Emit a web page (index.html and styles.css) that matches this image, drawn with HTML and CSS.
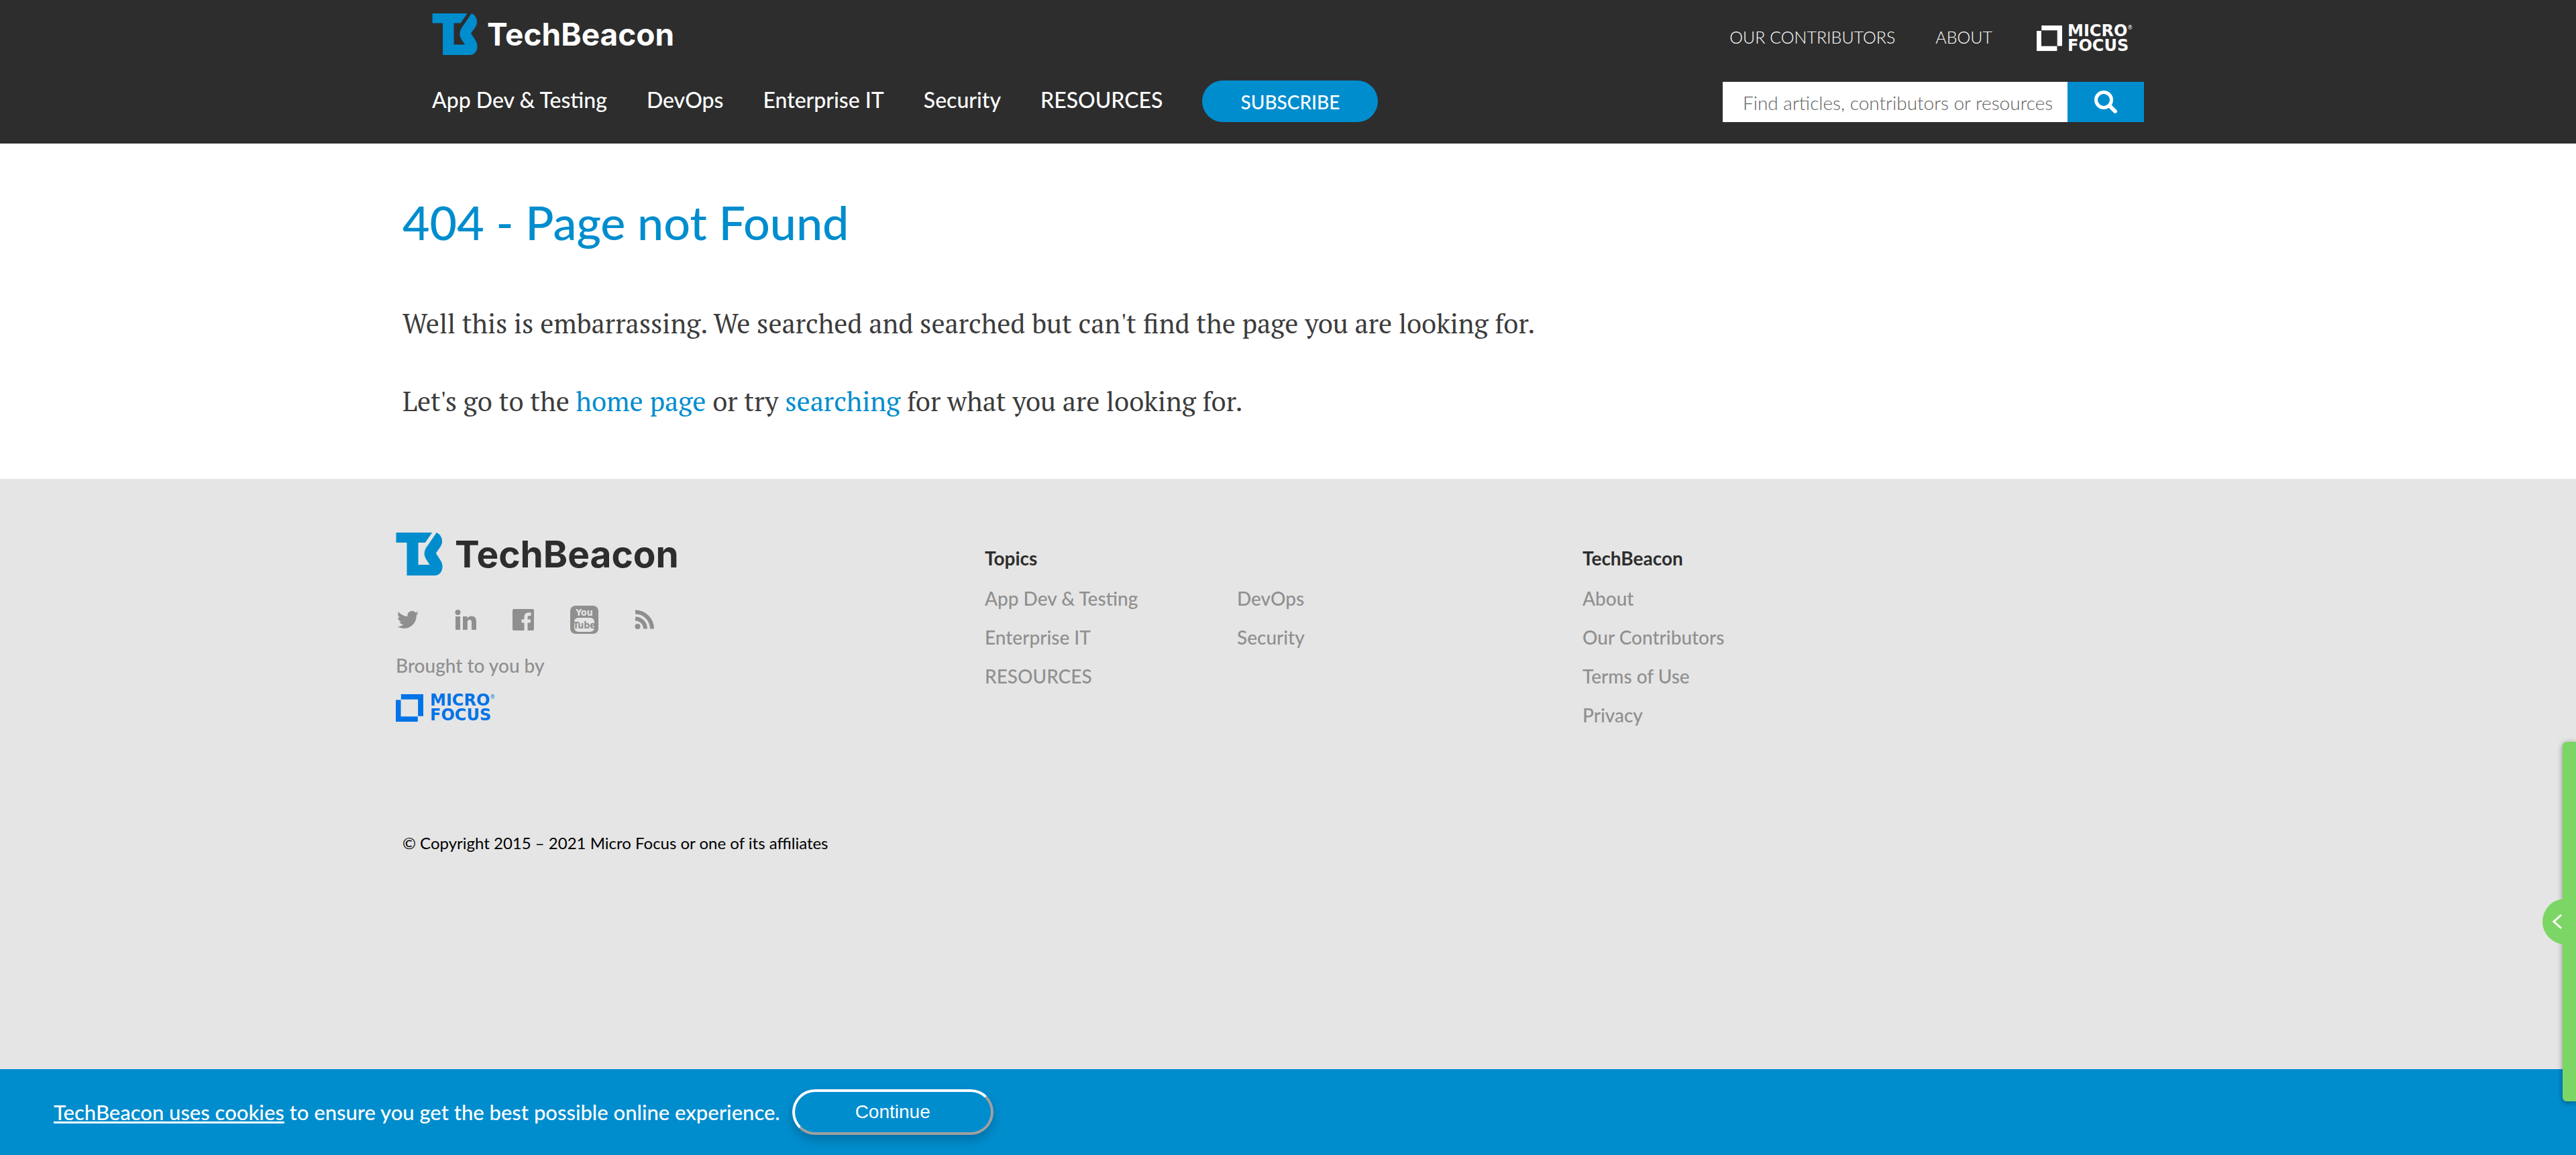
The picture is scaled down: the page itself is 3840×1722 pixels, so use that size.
FILE: index.html
```html
<!DOCTYPE html>
<html lang="en">
<head>
<meta charset="utf-8">
<title>404 - Page not Found | TechBeacon</title>
<meta name="viewport" content="width=device-width, initial-scale=1">
<link rel="stylesheet" href="styles.css">
</head>
<body>
<svg class="defs" aria-hidden="true">
  <symbol id="tb-mark" viewBox="0 0 207 192"><path d="M0 0H161L130 45H99V144H150L133 118Q119 94 133 70L181 0C204 10 213 40 199 62L178 92L201 128C216 155 203 192 173 192H48V45H0Z"/></symbol>
  <symbol id="mf-mark" viewBox="0 0 120 120"><path d="M23 0H120V96H97V23H23ZM0 25H22V97H96V120H0Z"/></symbol>
</svg>

<header class="site-header">
  <div class="header-inner">
    <div class="header-row">
      <a class="brand" href="#"><svg class="brand-mark"><use href="#tb-mark"/></svg><span>TechBeacon</span></a>
      <nav class="utility" aria-label="Utility">
        <a href="#">OUR CONTRIBUTORS</a>
        <a href="#">ABOUT</a>
        <a class="mf" href="#"><svg class="mf-mark"><use href="#mf-mark"/></svg><span class="mf-name">MICRO<sup>®</sup><br>FOCUS</span></a>
      </nav>
    </div>
    <div class="header-row header-row-main">
      <nav class="main-nav" aria-label="Main">
        <a href="#">App Dev &amp; Testing</a>
        <a href="#">DevOps</a>
        <a href="#">Enterprise IT</a>
        <a href="#">Security</a>
        <a href="#">RESOURCES</a>
        <a class="subscribe" href="#">SUBSCRIBE</a>
      </nav>
      <form class="search">
        <input type="text" aria-label="Search" placeholder="Find articles, contributors or resources">
        <button type="button" aria-label="Search">
          <svg viewBox="0 0 34 34"><circle cx="14" cy="14" r="11.500" fill="none" stroke="#fff" stroke-width="5"/><path d="M23 23L31 31" stroke="#fff" stroke-width="6" stroke-linecap="round"/></svg>
        </button>
      </form>
    </div>
  </div>
</header>

<main class="content">
  <h1>404 - Page not Found</h1>
  <p>Well this is embarrassing. We searched and searched but can't find the page you are looking for.</p>
  <p>Let's go to the <a href="#">home page</a> or try <a href="#">searching</a> for what you are looking for.</p>
</main>

<footer class="site-footer">
  <div class="footer-grid">
    <section class="about">
      <a class="brand" href="#"><svg class="brand-mark"><use href="#tb-mark"/></svg><span>TechBeacon</span></a>
      <ul class="social">
        <li><a href="#" aria-label="Twitter"><svg class="icon-32" viewBox="0 0 24 24"><path d="M23.950 4.570a10 10 0 0 1-2.820.770 4.960 4.960 0 0 0 2.160-2.720c-.950.550-2 .960-3.130 1.180a4.920 4.920 0 0 0-8.380 4.480C7.690 8.090 4.070 6.130 1.640 3.160a4.920 4.920 0 0 0 1.520 6.570 4.900 4.900 0 0 1-2.230-.610v.060a4.920 4.920 0 0 0 3.950 4.830 5 5 0 0 1-2.210.080 4.940 4.940 0 0 0 4.600 3.420A9.870 9.870 0 0 1 0 19.540a13.990 13.990 0 0 0 7.550 2.210c9.050 0 14-7.500 14-13.980 0-.210 0-.420-.020-.630a9.940 9.940 0 0 0 2.420-2.570z"/></svg></a></li>
        <li><a href="#" aria-label="LinkedIn"><svg class="icon-32" viewBox="0 0 32 32"><circle cx="4.500" cy="5" r="4"/><path d="M1 11H8V31H1ZM12 11H18.500V14C20 11.500 22.500 10.500 25 10.500C30 10.500 32 14 32 19V31H25V20.500C25 18 24.500 16 22 16C19.500 16 18.800 18 18.800 20.500V31H12Z"/></svg></a></li>
        <li><a href="#" aria-label="Facebook"><svg class="icon-32" viewBox="0 0 32 32"><path d="M2 0H30Q32 0 32 2V30Q32 32 30 32H22.500V20.500H26.500L27.200 15.500H22.500V12.500C22.500 11 23 10 25 10H27.500V5.500C27 5.400 25.600 5.200 24 5.200C20 5.200 17.500 7.600 17.500 11.800V15.500H13.500V20.500H17.500V32H2Q0 32 0 30V2Q0 0 2 0Z"/></svg></a></li>
        <li><a href="#" aria-label="YouTube"><svg class="icon-42" viewBox="0 0 42 42"><rect width="42" height="42" rx="8"/><rect class="tube" x="6" y="18" width="30" height="21" rx="6"/><text class="you-text" x="21" y="15">You</text><text x="21" y="34">Tube</text></svg></a></li>
        <li><a href="#" aria-label="RSS"><svg class="icon-30" viewBox="0 0 30 30"><circle cx="4.500" cy="25" r="4"/><path class="wave" d="M1 13.500A15 15 0 0 1 16 28.500M1 3.500A25 25 0 0 1 26 28.500"/></svg></a></li>
      </ul>
      <p class="sponsor">Brought to you by</p>
      <a class="mf" href="#"><svg class="mf-mark"><use href="#mf-mark"/></svg><span class="mf-name">MICRO<sup>®</sup><br>FOCUS</span></a>
    </section>
    <section class="links">
      <h2>Topics</h2>
      <ul class="two-col">
        <li><a href="#">App Dev &amp; Testing</a></li>
        <li><a href="#">DevOps</a></li>
        <li><a href="#">Enterprise IT</a></li>
        <li><a href="#">Security</a></li>
        <li><a href="#">RESOURCES</a></li>
      </ul>
    </section>
    <section class="links">
      <h2>TechBeacon</h2>
      <ul>
        <li><a href="#">About</a></li>
        <li><a href="#">Our Contributors</a></li>
        <li><a href="#">Terms of Use</a></li>
        <li><a href="#">Privacy</a></li>
      </ul>
    </section>
  </div>
  <p class="copyright">© Copyright 2015 – 2021 Micro Focus or one of its affiliates</p>
</footer>

<div class="cookie-bar">
  <p><a href="#">TechBeacon uses cookies</a> to ensure you get the best possible online experience.</p>
  <button type="button">Continue</button>
</div>

<aside class="side-tab">
  <button type="button" aria-label="Open panel"><svg viewBox="0 0 15 24"><path d="M13 2L2 12L13 22"/></svg></button>
</aside>
</body>
</html>
```

FILE: styles.css
```css
* { box-sizing: border-box; }

body {
  margin: 0;
  min-height: 100vh;
  display: flex;
  flex-direction: column;
  font-family: Lato, "Liberation Sans", sans-serif;
  font-size: 28px;
  font-weight: 500;
  color: #3c3c3c;
  background: #fff;
}

a { color: #008dce; text-decoration: none; }
h1, h2, p, ul { margin: 0; padding: 0; }
ul { list-style: none; }
svg { display: block; }
.defs { position: absolute; width: 0; height: 0; }

.brand { display: flex; align-items: center; font-family: Inter, sans-serif; font-weight: 700; }
.brand-mark { fill: #008dce; }
.mf { display: flex; align-items: center; }
.mf-name { font-family: "DejaVu Sans", sans-serif; font-size: 24px; font-weight: 700; line-height: 22px; }
.mf-name sup { font-size: 8px; font-weight: 400; line-height: 0; vertical-align: 10px; }

/* Header */
.site-header { background: #2d2d2d; padding: 20px 40px 32px; }
.header-inner { max-width: 2552px; margin: 0 auto; }
.header-row { display: flex; justify-content: space-between; height: 62px; }
.header-row-main { margin-top: 38px; }
.site-header .brand { color: #fff; font-size: 46px; line-height: 62px; gap: 14px; }
.site-header .brand-mark { width: 68px; height: 62px; }

.utility { display: flex; gap: 60px; padding-right: 4px; font-size: 25px; font-weight: 300; line-height: 70px; }
.utility a { color: #fff; }
.utility .mf { width: 156px; gap: 8px; height: 38px; margin: 18px 0 0 6px; }
.utility .mf-mark { width: 38px; height: 38px; fill: #fff; }

.main-nav { display: flex; gap: 59px; font-size: 32px; line-height: 58px; white-space: nowrap; }
.main-nav a { color: #fff; }
.main-nav .subscribe { width: 262px; background: #008dce; border-radius: 31px; font-size: 28px; line-height: 64px; text-align: center; }

.search { display: flex; width: 628px; height: 60px; margin-top: 2px; }
.search input { flex: 1; min-width: 0; border: 0; border-radius: 0; padding: 2px 0 0 30px; background: #fff; font: 300 28px Lato, sans-serif; color: #2d2d2d; }
.search input::placeholder { color: #606060; opacity: 1; }
.search button { width: 114px; border: 0; padding: 0; background: #008dce; display: grid; place-items: center; }
.search button svg { width: 34px; height: 34px; }

/* Content */
.content { width: 100%; max-width: 2720px; margin: 0 auto; padding: 72px 40px 74px; }
.content h1 { font-size: 70px; line-height: 90px; font-weight: 500; color: #008dce; margin-bottom: 64px; }
.content p { font-family: "PT Serif", "Liberation Serif", serif; font-size: 40px; font-weight: 400; line-height: 84px; }
.content p + p { margin-top: 32px; }

/* Footer */
.site-footer { flex: 1; background: #e5e5e5; padding: 80px 40px 120px; }
.site-footer a { color: #8f8f8f; }
.footer-grid { max-width: 2660px; margin: 0 auto; display: grid; grid-template-columns: 878px 891px 1fr; }
.site-footer .brand { color: #2d2d2d; font-size: 55px; line-height: 64px; gap: 18px; }
.site-footer .brand-mark { width: 70px; height: 64px; }
.social { display: flex; align-items: center; gap: 54px; margin-top: 45px; padding-left: 2px; height: 42px; fill: #8f8f8f; }
.icon-32 { width: 32px; height: 32px; }
.icon-42 { width: 42px; height: 42px; }
.icon-30 { width: 30px; height: 30px; }
.icon-42 .tube { fill: #e5e5e5; }
.icon-42 text { font: 700 14px "Liberation Sans Narrow", "DejaVu Sans Condensed", sans-serif; text-anchor: middle; }
.icon-42 .you-text { fill: #e5e5e5; }
.wave { fill: none; stroke: #8f8f8f; stroke-width: 6; }
.sponsor { margin-top: 30px; line-height: 34px; color: #8f8f8f; }
.about .mf { margin-top: 25px; gap: 10px; height: 42px; }
.about .mf-mark { width: 41px; height: 41px; fill: #0073e7; }
.about .mf-name { color: #0073e7; }

.links { padding-top: 14px; }
.links h2 { font-size: 28px; line-height: 48px; font-weight: 700; color: #2d2d2d; margin-bottom: 7px; }
.links li { line-height: 58px; }
.two-col { display: grid; grid-template-columns: 376px 1fr; }
.copyright { max-width: 2640px; margin: 144px auto 0; font-size: 24px; font-weight: 400; line-height: 36px; color: #000; }

/* Cookie notice */
.cookie-bar { display: flex; align-items: center; gap: 18px; height: 128px; padding: 0 80px; background: #008dce; color: #fff; font-size: 31px; }
.cookie-bar a { color: #fff; text-decoration: underline; }
.cookie-bar button { width: 300px; height: 68px; border: 4px solid; border-color: #fff #a0a0a0 #a0a0a0 #fff; border-radius: 34px; background: #008dce; color: #fff; font: 28px "Liberation Sans", Arial, sans-serif; box-shadow: 0 8px 16px rgba(0, 0, 0, .2); }

/* Slide-out tab */
.side-tab { position: fixed; right: 0; bottom: 80px; width: 20px; height: 536px; display: flex; align-items: center; background: #7cd665; border-radius: 6px 0 0 6px; box-shadow: 0 2px 8px rgba(0, 0, 0, .4); }
.side-tab button { flex: none; width: 50px; height: 68px; margin-left: -30px; padding: 0 0 0 15px; border: 0; border-radius: 34px 0 0 34px; background: #7cd665; }
.side-tab svg { width: 15px; height: 24px; fill: none; stroke: #fff; stroke-width: 3; }
```
